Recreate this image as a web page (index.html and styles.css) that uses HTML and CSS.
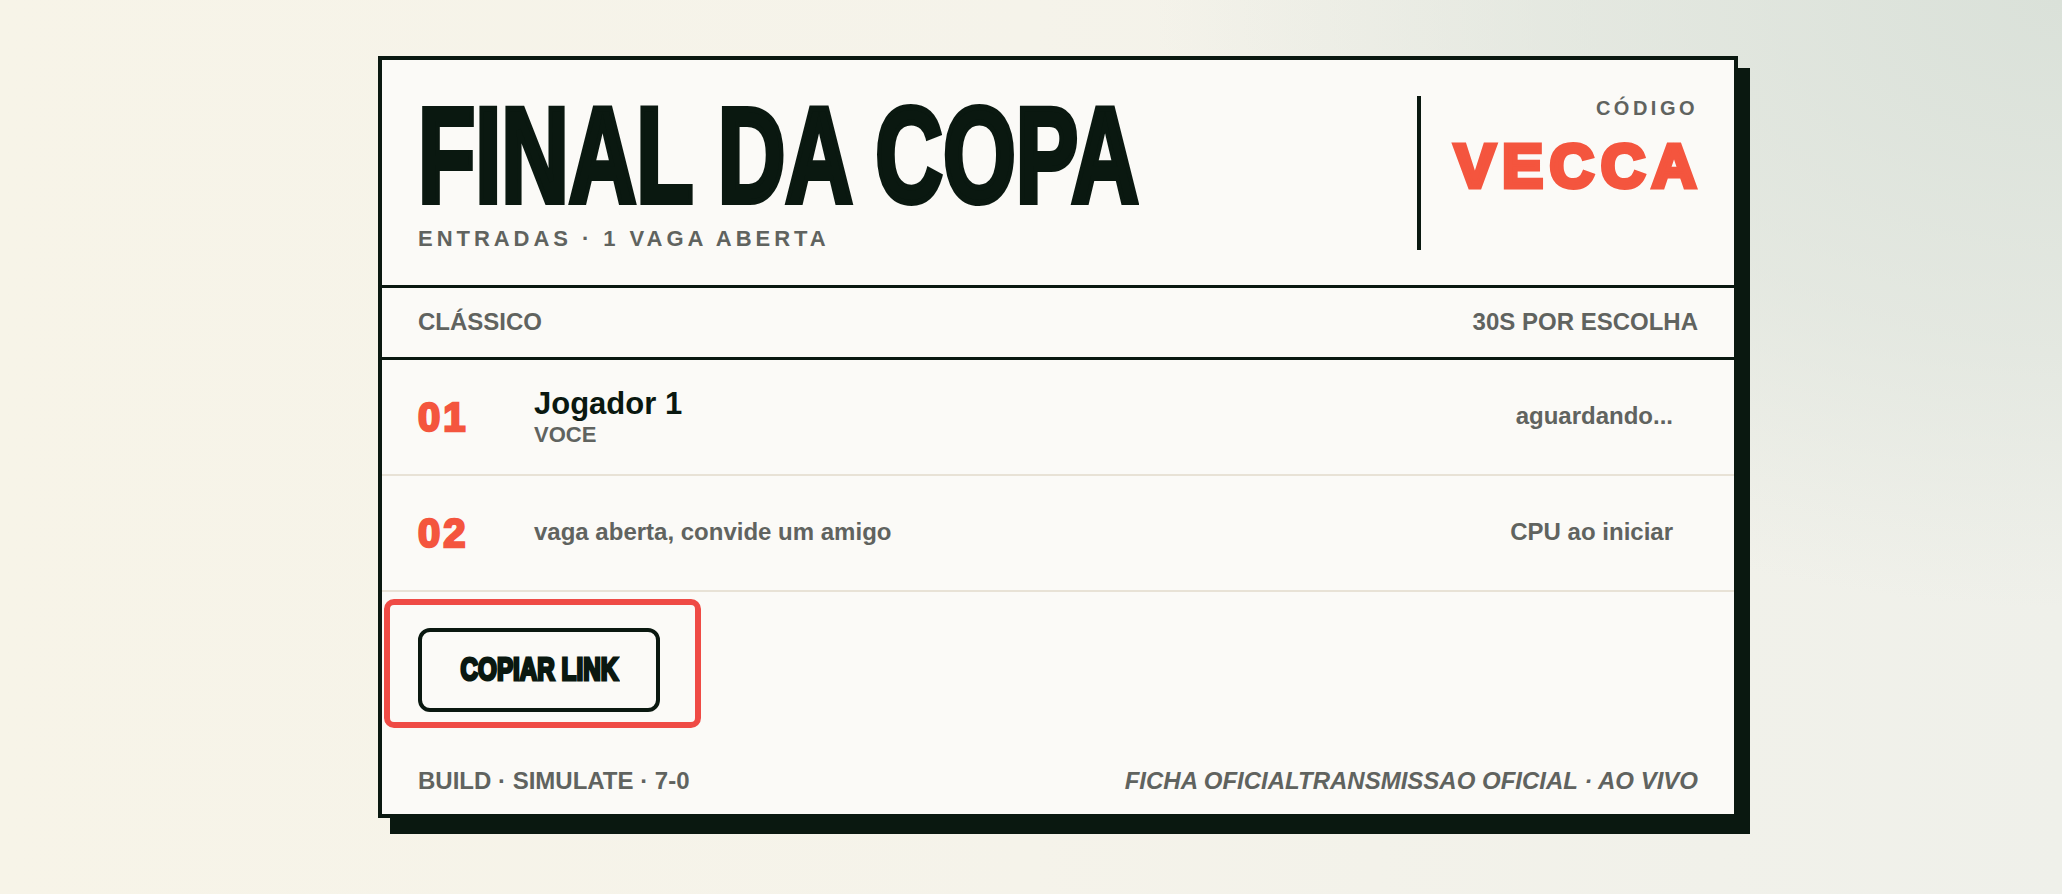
FILE: index.html
```html
<!DOCTYPE html>
<html lang="pt-BR">
<head>
<meta charset="utf-8">
<title>Final da Copa</title>
<link rel="stylesheet" href="styles.css">
</head>
<body>
<div class="page">
  <section class="card">
    <header class="card-head">
      <div class="head-main">
        <h1 class="title"><span class="title-text">FINAL DA COPA</span></h1>
        <p class="subtitle">ENTRADAS · 1 VAGA ABERTA</p>
      </div>
      <div class="head-code">
        <span class="code-rule"></span>
        <div class="code-box">
          <div class="code-label">CÓDIGO</div>
          <div class="code-value">VECCA</div>
        </div>
      </div>
    </header>
    <div class="meta">
      <span>CLÁSSICO</span>
      <span>30S POR ESCOLHA</span>
    </div>
    <ol class="slots">
      <li class="slot">
        <span class="slot-num">01</span>
        <div class="slot-who">
          <div class="slot-name">Jogador 1</div>
          <div class="slot-tag">VOCE</div>
        </div>
        <span class="slot-status">aguardando...</span>
      </li>
      <li class="slot">
        <span class="slot-num">02</span>
        <div class="slot-who">
          <div class="slot-note">vaga aberta, convide um amigo</div>
        </div>
        <span class="slot-status">CPU ao iniciar</span>
      </li>
    </ol>
    <div class="actions">
      <div class="focus-ring">
        <button class="btn" type="button"><span class="btn-text">COPIAR LINK</span></button>
      </div>
    </div>
    <footer class="card-foot">
      <span>BUILD · SIMULATE · 7-0</span>
      <span class="foot-right">FICHA OFICIALTRANSMISSAO OFICIAL · AO VIVO</span>
    </footer>
  </section>
</div>
</body>
</html>
```
FILE: styles.css
```css
html, body {
  margin: 0;
  padding: 0;
}

body {
  min-height: 100vh;
  font-family: "Liberation Sans", Arial, sans-serif;
  background:
    radial-gradient(ellipse 55% 85% at 100% 0%, #dae1d9 0%, rgba(218, 225, 217, 0.55) 45%, rgba(218, 225, 217, 0) 80%),
    linear-gradient(90deg, #f7f4e8 0%, #f5f3ea 50%, #eff0ea 100%);
}

.page {
  padding: 56px 0 60px 378px;
}

.card {
  width: 1360px;
  box-sizing: border-box;
  border: 4px solid #0a1810;
  background: #fbfaf7;
  box-shadow: 12px 12px 0 #0a1810, 12px 16px 0 #0a1810;
}

/* header */
.card-head {
  display: flex;
  padding: 36px 36px 35px;
  border-bottom: 3px solid #0a1810;
}

.head-main {
  flex: 1;
  min-width: 0;
}

.title {
  margin: 0;
  font-size: 135px;
  line-height: 119px;
  font-weight: 700;
  color: #0a1810;
  white-space: nowrap;
}

.title-text {
  display: inline-block;
  transform: scaleX(0.693);
  transform-origin: 0 50%;
  -webkit-text-stroke: 6px #0a1810;
}

.subtitle {
  margin: 13px 0 0;
  font-size: 22px;
  line-height: 22px;
  font-weight: 700;
  letter-spacing: 0.18em;
  color: #60635f;
}

.head-code {
  display: flex;
  gap: 33px;
  flex: none;
}

.code-rule {
  width: 4px;
  background: #0a1810;
}

.code-box {
  text-align: right;
}

.code-label {
  font-size: 20px;
  line-height: 24px;
  font-weight: 700;
  letter-spacing: 0.175em;
  color: #60635f;
}

.code-value {
  margin-top: 12px;
  margin-right: -5px;
  font-size: 61px;
  line-height: 68px;
  font-weight: 700;
  letter-spacing: 7px;
  color: #f4553e;
  -webkit-text-stroke: 5px #f4553e;
}

/* meta */
.meta {
  display: flex;
  justify-content: space-between;
  padding: 20px 36px;
  font-size: 24px;
  line-height: 1.2;
  font-weight: 700;
  color: #60635f;
  border-bottom: 3px solid #0a1810;
}

/* slots */
.slots {
  list-style: none;
  margin: 0;
  padding: 0;
}

.slot {
  display: grid;
  grid-template-columns: 116px 1fr auto;
  align-items: center;
  min-height: 116px;
  box-sizing: border-box;
  padding: 0 61px 0 36px;
  border-bottom: 2px solid #e8e2d6;
}

.slot-num {
  font-size: 40px;
  line-height: 1;
  font-weight: 700;
  letter-spacing: 3px;
  color: #f4553e;
  -webkit-text-stroke: 2.5px #f4553e;
}

.slot-name {
  font-size: 31px;
  line-height: 34px;
  font-weight: 700;
  color: #0a1810;
}

.slot-tag {
  margin-top: 2px;
  font-size: 22px;
  line-height: 24px;
  font-weight: 700;
  color: #60635f;
}

.slot-note,
.slot-status {
  font-size: 24px;
  line-height: 1.2;
  font-weight: 700;
  color: #60635f;
}

/* actions */
.actions {
  padding: 7px 0 0 2px;
}

.focus-ring {
  display: flex;
  width: fit-content;
  border: 6px solid #ef4b45;
  border-radius: 10px;
  padding: 23px 35px 10px 28px;
}

.btn {
  width: 242px;
  height: 84px;
  box-sizing: border-box;
  padding: 0;
  border: 4px solid #0a1810;
  border-radius: 12px;
  background: transparent;
  display: flex;
  align-items: center;
  justify-content: center;
  font-family: inherit;
  cursor: pointer;
}

.btn-text {
  display: inline-block;
  font-size: 31.5px;
  line-height: 1;
  font-weight: 700;
  color: #0a1810;
  transform: scaleX(0.77);
  -webkit-text-stroke: 3px #0a1810;
}

/* footer */
.card-foot {
  display: flex;
  justify-content: space-between;
  padding: 39px 36px 18px;
  font-size: 24px;
  line-height: 1.2;
  font-weight: 700;
  color: #60635f;
}

.foot-right {
  font-style: italic;
}
```
